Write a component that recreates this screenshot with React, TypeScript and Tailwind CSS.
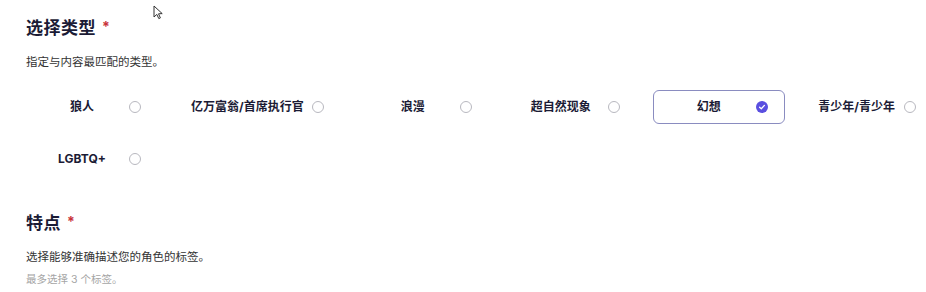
import React from "react";

const options = [
  { label: "狼人", selected: false },
  { label: "亿万富翁/首席执行官", selected: false },
  { label: "浪漫", selected: false },
  { label: "超自然现象", selected: false },
  { label: "幻想", selected: true },
  { label: "青少年/青少年", selected: false },
  { label: "LGBTQ+", selected: false },
];

function Radio({ checked }: { checked: boolean }) {
  if (checked) {
    return (
      <span className="flex h-[12px] w-[12px] shrink-0 items-center justify-center rounded-full bg-[#5a4fe0]">
        <svg width="8" height="8" viewBox="0 0 8 8" fill="none">
          <path d="M1.6 4.2 L3.3 5.7 L6.4 2.4" stroke="#fff" strokeWidth="1.3" strokeLinecap="round" strokeLinejoin="round" />
        </svg>
      </span>
    );
  }
  return <span className="h-[12px] w-[12px] shrink-0 rounded-full border border-[#b8b8bf] bg-white" />;
}

export default function App() {
  return (
    <div
      className="relative h-[292px] w-[926px] overflow-hidden bg-white pl-[26px] pt-[16px] text-[#1b1b35]"
      style={{ fontFamily: '"Inter", "Noto Sans CJK SC", sans-serif' }}
    >
      <svg className="absolute left-[153px] top-[5px]" width="11" height="15" viewBox="0 0 11 15">
        <path d="M1 1 L1 12 L3.8 9.4 L5.8 13.6 L7.4 12.9 L5.5 8.8 L9.2 8.6 Z" fill="#fff" stroke="#333" strokeWidth="1" strokeLinejoin="round" />
      </svg>

      <div className="flex items-start leading-[24px]">
        <span className="text-[17px] font-bold tracking-[0.5px]">选择类型</span>
        <span className="ml-[6px] mt-[3px] text-[14px] font-bold leading-[16px] text-[#c8323a]">*</span>
      </div>
      <div className="mt-[14px] text-[11.5px] leading-[16px] text-[#333]">指定与内容最匹配的类型。</div>

      <div className="mt-[20px] flex w-[940px] flex-wrap gap-x-[16px] gap-y-[18px]">
        {options.map((o) => (
          <div
            key={o.label}
            className={
              "flex h-[34px] items-center rounded-[6px] border px-[16px] " +
              (o.selected ? "border-[#8a8cc0]" : "border-transparent")
            }
          >
            <span className="min-w-[78px] whitespace-nowrap text-center text-[12px] font-bold leading-[16px]">
              {o.label}
            </span>
            <span className="ml-[8px] flex">
              <Radio checked={o.selected} />
            </span>
          </div>
        ))}
      </div>

      <div className="mt-[35px] flex items-start leading-[24px]">
        <span className="text-[17px] font-bold tracking-[0.5px]">特点</span>
        <span className="ml-[6px] mt-[3px] text-[14px] font-bold leading-[16px] text-[#c8323a]">*</span>
      </div>
      <div className="mt-[14px] text-[11.5px] leading-[16px] text-[#333]">选择能够准确描述您的角色的标签。</div>
      <div className="mt-[7px] text-[10.5px] leading-[16px] text-[#a5a5a5]">最多选择 3 个标签。</div>
    </div>
  );
}
